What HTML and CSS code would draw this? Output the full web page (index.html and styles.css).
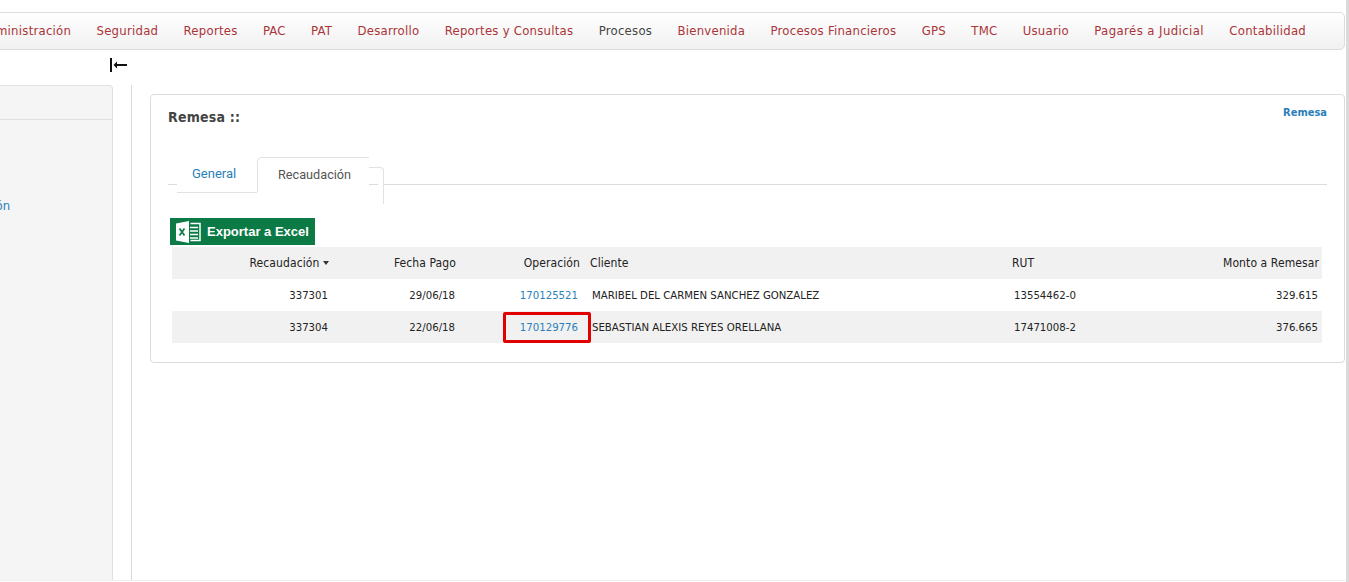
FILE: index.html
```html
<!DOCTYPE html>
<html lang="es">
<head>
    <meta charset="UTF-8">
    <meta name="viewport" content="width=device-width, initial-scale=1.0">
    <title>Remesa</title>
    <link rel="stylesheet" href="styles.css">
</head>
<body>

    <nav class="topnav">
        <a href="#">Administración</a>
        <a href="#">Seguridad</a>
        <a href="#">Reportes</a>
        <a href="#">PAC</a>
        <a href="#">PAT</a>
        <a href="#">Desarrollo</a>
        <a href="#">Reportes y Consultas</a>
        <a href="#" class="current">Procesos</a>
        <a href="#">Bienvenida</a>
        <a href="#">Procesos Financieros</a>
        <a href="#">GPS</a>
        <a href="#">TMC</a>
        <a href="#">Usuario</a>
        <a href="#" class="wide">Pagarés a Judicial</a>
        <a href="#">Contabilidad</a>
    </nav>

    <div class="collapse-row">
        <svg width="18" height="14" viewBox="0 0 18 14">
            <path d="M2 0v14" stroke="#111" stroke-width="2" fill="none"/>
            <path d="M6 7h12" stroke="#111" stroke-width="2" fill="none"/>
            <path d="M8 3.500L4.500 7L8 10.500z" fill="#111"/>
        </svg>
    </div>

    <div class="main">
        <aside class="sidebar">
            <div class="sidebar-head"></div>
            <a href="#" class="sidebar-link">Operación</a>
        </aside>

        <section class="content">
            <div class="card">
                <div class="card-head">
                    <h2>Remesa ::</h2>
                    <a href="#" class="crumb">Remesa</a>
                </div>

                <div class="tabs">
                    <a href="#" class="tab">General</a>
                    <a href="#" class="tab active">Recaudación</a>
                </div>

                <a href="#" class="excel-btn">
                    <svg width="26" height="24" viewBox="0 0 26 24">
                        <path d="M1 3.500L14 1v22L1 20.500z" fill="#fff"/>
                        <path d="M15.500 3.500H25v17h-9.500" fill="none" stroke="#fff" stroke-width="1.500"/>
                        <path d="M15 7.500h8M15 11h8M15 14.500h8M15 18h8" stroke="#fff" stroke-width="1.500"/>
                        <path d="M4.500 8.500L9.500 15.500M9.500 8.500L4.500 15.500" stroke="#0b7a45" stroke-width="1.700"/>
                    </svg>
                    Exportar a Excel
                </a>

                <table class="grid">
                    <thead>
                        <tr>
                            <th class="num col-rec">Recaudación <span class="caret"></span></th>
                            <th class="num col-date">Fecha Pago</th>
                            <th class="num col-op">Operación</th>
                            <th class="col-client">Cliente</th>
                            <th class="col-rut">RUT</th>
                            <th class="num col-amount">Monto a Remesar</th>
                        </tr>
                    </thead>
                    <tbody>
                        <tr>
                            <td class="num col-rec">337301</td>
                            <td class="num col-date">29/06/18</td>
                            <td class="num col-op"><a href="#">170125521</a></td>
                            <td class="col-client">MARIBEL DEL CARMEN SANCHEZ GONZALEZ</td>
                            <td class="col-rut">13554462-0</td>
                            <td class="num col-amount">329.615</td>
                        </tr>
                        <tr>
                            <td class="num col-rec">337304</td>
                            <td class="num col-date">22/06/18</td>
                            <td class="num col-op marked"><a href="#">170129776</a><span class="red-box"></span></td>
                            <td class="col-client">SEBASTIAN ALEXIS REYES ORELLANA</td>
                            <td class="col-rut">17471008-2</td>
                            <td class="num col-amount">376.665</td>
                        </tr>
                    </tbody>
                </table>
            </div>
        </section>
    </div>

</body>
</html>
```

FILE: styles.css
```css
html, body {
    height: 100%;
}
body {
    box-sizing: border-box;
    margin: 0;
    overflow: hidden;
    background-color: white;
    border-right: 3px solid #dadada;
    font-family: "DejaVu Sans", Verdana, sans-serif;
    font-stretch: condensed;
    font-size: 12px;
    color: #222;
}
a {
    text-decoration: none;
    color: #2a7fba;
}

/* top menu, the left end runs off the window */
.topnav {
    display: flex;
    justify-content: flex-end;
    gap: 25.300px;
    height: 38px;
    box-sizing: border-box;
    margin: 12px 1px 0 -10px;
    padding: 0 38px 2px 0;
    align-items: center;
    border: 1px solid #dcdcdc;
    border-radius: 5px;
    background: linear-gradient(#fff, #f1f1f1);
    white-space: nowrap;
    font-size: 13px;
    letter-spacing: 0.25px;
}
.topnav a {
    color: #ab3438;
    flex-shrink: 0;
}
.topnav a.current {
    color: #444;
}
.topnav a.wide {
    letter-spacing: 0.42px;
}

.collapse-row {
    box-sizing: border-box;
    height: 35px;
    padding: 0 0 5px 109px;
    display: flex;
    align-items: center;
}

.main {
    display: flex;
    height: 495px;
    border-bottom: 1px solid #eee;
}
.sidebar {
    box-sizing: border-box;
    width: 113px;
    flex-shrink: 0;
    background-color: #f5f5f5;
    border: 1px solid #e0e0e0;
    border-left: 0;
    border-bottom: 0;
    border-radius: 0 4px 0 0;
    overflow: hidden;
}
.sidebar-head {
    height: 33px;
    border-bottom: 1px solid #e0e0e0;
}
.sidebar-link {
    display: block;
    margin: 78px 0 0 -50px;
    font-size: 13px;
    white-space: nowrap;
}

.content {
    flex: 1;
    margin-left: 18px;
    border-left: 1px solid #d8d8d8;
    padding: 9px 1px 0 18px;
}
.card {
    box-sizing: border-box;
    height: 269px;
    border: 1px solid #dcdcdc;
    border-radius: 4px;
    padding: 0 17px;
}
.card-head {
    display: flex;
    justify-content: space-between;
    height: 51px;
}
.card-head h2 {
    margin: 14px 0 0;
    font-size: 14px;
    letter-spacing: 0.2px;
    font-weight: bold;
    color: #444;
}
.crumb {
    margin-top: 11px;
    font-size: 11px;
    font-weight: bold;
}

.tabs {
    display: flex;
    height: 27px;
    padding-left: 9px;
    margin-top: 11px;
    border-bottom: 1px solid #dcdcdc;
    font-family: Roboto, Arial, sans-serif;
    font-stretch: normal;
    font-size: 13px;
}
.tab {
    box-sizing: border-box;
    flex-shrink: 0;
    width: 80px;
    height: 36px;
    padding: 9px 0 0 15px;
    background-color: white;
    border-bottom: 1px solid #e2e2e2;
}
.tab.active {
    width: 112px;
    height: 35px;
    padding: 9px 0 0 20px;
    font-size: 12.700px;
    color: #555;
    border: 0;
    border-top: 1px solid #e2e2e2;
    border-left: 1px solid #e2e2e2;
    border-radius: 5px 0 0 0;
    position: relative;
}
/* the small corner that hangs off the right of the open tab */
.tab.active::after {
    content: "";
    position: absolute;
    left: 111px;
    top: 9px;
    width: 14px;
    height: 36px;
    border-top: 1px solid #e2e2e2;
    border-right: 1px solid #e2e2e2;
    border-radius: 0 4px 0 0;
    background: linear-gradient(to right, transparent 9px, white 9px);
}

.excel-btn {
    display: flex;
    width: 145px;
    height: 27px;
    margin: 33px 0 2px 2px;
    align-items: center;
    gap: 6px;
    padding-left: 5px;
    box-sizing: border-box;
    background-color: #0b7a45;
    color: white;
    font-family: "Liberation Sans", Arial, sans-serif;
    font-stretch: normal;
    font-weight: bold;
    font-size: 13px;
}

.grid {
    border-collapse: collapse;
    table-layout: fixed;
    width: 1150px;
    margin-left: 4px;
}
.grid th, .grid td {
    box-sizing: border-box;
    height: 32px;
    text-align: left;
    color: #222;
    white-space: nowrap;
}
.grid th {
    padding: 0 2px;
    font-size: 12px;
    letter-spacing: 0.1px;
    font-weight: normal;
    background-color: #f1f1f1;
}
.grid td {
    padding: 0 4px;
    font-size: 11.300px;
}
.grid td a {
    color: #2a7fba;
}
.grid tbody tr:nth-child(2) td {
    background-color: #f1f1f1;
}
.grid .num {
    text-align: right;
}
.col-rec { width: 159px; }
.col-date { width: 127px; }
.col-op { width: 130px; }
.col-client { width: 422px; }
.col-rut { width: 150px; }
.grid td.col-rec { padding-right: 3px; }
.grid td.col-date { padding-right: 3px; }
.grid th.col-op { padding-right: 8px; }
.grid td.col-op { padding-right: 10px; }
.grid th.col-amount { padding-right: 3px; }
.grid td.col-amount { padding-right: 4px; }
.caret {
    display: inline-block;
    border-left: 3.500px solid transparent;
    border-right: 3.500px solid transparent;
    border-top: 4px solid #333;
    vertical-align: 2px;
}
.marked {
    position: relative;
}
.red-box {
    position: absolute;
    left: 45px;
    top: 1px;
    width: 88px;
    height: 31px;
    box-sizing: border-box;
    border: 3px solid #e00000;
    border-radius: 2px;
}
```
